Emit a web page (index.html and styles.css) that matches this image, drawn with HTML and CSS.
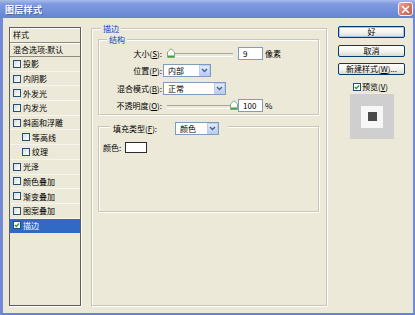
FILE: index.html
```html
<!DOCTYPE html>
<html lang="zh-CN">
<head>
<meta charset="utf-8">
<title>图层样式</title>
<link rel="stylesheet" href="styles.css">
</head>
<body>
<div class="win">
  <div class="title">
    <span class="ttext">图层样式</span>
    <span class="close"><svg width="9" height="9" viewBox="0 0 9 9"><path d="M1.5 1.5 L7.5 7.5 M7.5 1.5 L1.5 7.5" stroke="#fff" stroke-width="1.6" stroke-linecap="round"/></svg></span>
  </div>
  <div class="frame">
    <div class="list">
      <div class="lhead">样式</div>
      <div class="lblend">混合选项:默认</div>
      <div class="item"><span class="cb"></span>投影</div>
      <div class="item"><span class="cb"></span>内阴影</div>
      <div class="item"><span class="cb"></span>外发光</div>
      <div class="item"><span class="cb"></span>内发光</div>
      <div class="item"><span class="cb"></span>斜面和浮雕</div>
      <div class="item sub"><span class="cb"></span>等高线</div>
      <div class="item sub"><span class="cb"></span>纹理</div>
      <div class="item"><span class="cb"></span>光泽</div>
      <div class="item"><span class="cb"></span>颜色叠加</div>
      <div class="item"><span class="cb"></span>渐变叠加</div>
      <div class="item"><span class="cb"></span>图案叠加</div>
      <div class="item sel"><span class="cb"><svg width="6" height="6" viewBox="0 0 7 7"><path d="M1 3.5 L2.8 5.3 L6 1.6" stroke="#21a121" stroke-width="1.7" fill="none"/></svg></span>描边</div>
    </div>

    <div class="main grp">
      <span class="lg">描边</span>
      <div class="inner grp">
        <span class="lg">结构</span>
        <div class="row">
          <span class="lab">大小(<u>S</u>):</span>
          <span class="slider"><span class="thumb t-left"><svg width="8" height="10" viewBox="0 0 8 10"><path d="M0.5 9.5 V4 L4 0.7 L7.5 4 V9.5 Z" fill="#fdfdfb" stroke="#8aa58a"/><rect x="1" y="7.5" width="6" height="1.6" fill="#2fae2f"/></svg></span></span>
          <span class="inp">9</span>
          <span class="unit">像素</span>
        </div>
        <div class="row">
          <span class="lab">位置(<u>P</u>):</span>
          <span class="dd dd1">内部<span class="ddb"><svg width="7" height="5" viewBox="0 0 7 5"><path d="M1 1 L3.5 3.5 L6 1" stroke="#4d6185" stroke-width="1.4" fill="none"/></svg></span></span>
        </div>
        <div class="row">
          <span class="lab">混合模式(<u>B</u>):</span>
          <span class="dd dd2">正常<span class="ddb"><svg width="7" height="5" viewBox="0 0 7 5"><path d="M1 1 L3.5 3.5 L6 1" stroke="#4d6185" stroke-width="1.4" fill="none"/></svg></span></span>
        </div>
        <div class="row">
          <span class="lab">不透明度(<u>O</u>):</span>
          <span class="slider"><span class="thumb t-right"><svg width="8" height="10" viewBox="0 0 8 10"><path d="M0.5 9.5 V4 L4 0.7 L7.5 4 V9.5 Z" fill="#fdfdfb" stroke="#8aa58a"/><rect x="1" y="7.5" width="6" height="1.6" fill="#2fae2f"/></svg></span></span>
          <span class="inp">100</span>
          <span class="unit">%</span>
        </div>
      </div>

      <div class="fill grp">
        <div class="lg2">
          <span class="flab">填充类型(<u>F</u>):</span>
          <span class="dd dd3">颜色<span class="ddb"><svg width="7" height="5" viewBox="0 0 7 5"><path d="M1 1 L3.5 3.5 L6 1" stroke="#4d6185" stroke-width="1.4" fill="none"/></svg></span></span>
        </div>
        <div class="crow">
          <span class="clab">颜色:</span>
          <span class="swatch"></span>
        </div>
      </div>
    </div>

    <div class="side">
      <div class="btn def">好</div>
      <div class="btn">取消</div>
      <div class="btn">新建样式(<u>W</u>)...</div>
      <div class="pv"><span class="cb"><svg width="6" height="6" viewBox="0 0 7 7"><path d="M1 3.5 L2.8 5.3 L6 1.6" stroke="#21a121" stroke-width="1.7" fill="none"/></svg></span>预览(<u>V</u>)</div>
      <div class="pbox"><div class="pwhite"><div class="pdark"></div></div></div>
    </div>
  </div>
</div>
</body>
</html>
```
FILE: styles.css
```css
* { box-sizing: border-box; }
html, body { margin: 0; padding: 0; }
body {
  width: 415px; height: 315px; overflow: hidden;
  font-family: "Noto Sans CJK SC", "Noto Sans", sans-serif;
  font-size: 8px; color: #000; background: #ece9d8;
}
u { text-decoration: underline; }
.win { width: 415px; height: 315px; display: flex; flex-direction: column; background: #ece9d8; }

.title {
  height: 18px; flex: none; display: flex; align-items: center; justify-content: space-between;
  padding: 0 2px 0 5px;
  background: linear-gradient(#a7bcee, #7f9ade 22%, #7390da 60%, #6783d2);
  color: #fff; font-weight: bold; font-size: 9px; letter-spacing: 0.3px;
}
.ttext { text-shadow: 1px 1px 0 #4a64a8; }
.close {
  width: 15px; height: 14px; border: 1px solid #f4f4f4; border-radius: 3px;
  background: linear-gradient(135deg, #eca596, #d9735f 55%, #c9604d);
  display: flex; align-items: center; justify-content: center;
}

.frame {
  flex: 1; display: flex; align-items: flex-start;
  padding: 8px 0 0 6px;
  border-left: 3px solid #7189d6; border-right: 2px solid #7189d6; border-bottom: 2px solid #6a82cf;
}

/* left list */
.list {
  width: 72px; height: 279px; margin-top: 1px; flex: none;
  border: 1px solid #5d5d5a; box-shadow: 1px 1px 0 #fff;
  display: flex; flex-direction: column;
}
.lhead { height: 15px; line-height: 14px; padding-left: 3px; border-bottom: 1px solid #8e8b7e; box-shadow: inset 1px 1px 0 #fff; }
.lblend { height: 14px; line-height: 13px; padding-left: 3px; border-bottom: 1px solid #8e8b7e; box-shadow: inset 0 1px 0 #fff; }
.item { height: 14.7px; display: flex; align-items: center; padding-left: 3px; border-bottom: 1px solid #f5f4ed; }
.item.sub { padding-left: 12px; }
.item.sel { background: #316ac5; color: #fff; border-bottom-color: #316ac5; }
.cb {
  width: 8px; height: 8px; flex: none; margin-right: 2px;
  border: 1px solid #1c5180; background: linear-gradient(135deg, #dcdcd5, #fff);
  display: flex; align-items: center; justify-content: center;
}
.sel .cb { background: #fff; }

/* group boxes */
.grp { position: relative; border: 1px solid #c9c6b6; box-shadow: inset 1px 1px 0 #fff, 1px 1px 0 #fff; }
.lg { position: absolute; top: -6px; left: 10px; padding: 0 2px; line-height: 11px; background: #ece9d8; color: #0046d5; }
.main { width: 236px; height: 278px; margin: 2px 0 0 10px; padding: 10px 0 0 6px; flex: none; }
.main > .lg { left: 9px; }
.inner { width: 221px; height: 76px; padding-top: 7px; }
.inner > .lg { left: 8px; top: -6px; }

.row { display: flex; align-items: center; height: 13px; margin-bottom: 4.3px; }
.lab { width: 64px; text-align: right; padding-right: 1px; white-space: nowrap; }
.slider { position: relative; width: 72px; height: 13px; }
.slider::before {
  content: ""; position: absolute; left: 4px; right: 2px; top: 6px; height: 2px;
  border-top: 1px solid #a7a698; border-bottom: 1px solid #fff;
}
.thumb { position: absolute; top: 1px; width: 8px; height: 10px; line-height: 0; }
.t-left { left: 4px; }
.t-right { left: 67px; }
.inp {
  width: 25px; height: 13px; margin-left: 3px; padding-left: 4px;
  border: 1px solid #7f9db9; background: #fff; line-height: 11px;
}
.unit { margin-left: 2px; }

.dd {
  height: 13px; border: 1px solid #7f9db9; background: #fff;
  display: flex; align-items: center; padding-left: 4px; line-height: 11px;
}
.ddb {
  margin-left: auto; width: 11px; height: 11px; border: 1px solid #bccdf4;
  background: linear-gradient(#e2eafe, #b9cdf8);
  display: flex; align-items: center; justify-content: center;
}
.dd1 { width: 48px; }
.dd2 { width: 63px; }
.dd3 { width: 44px; }

.fill { width: 221px; height: 86px; margin-top: 11px; padding: 15px 0 0 4px; }
.lg2 { position: absolute; top: -5px; left: 11px; display: flex; align-items: center; padding: 0 9px 0 3px; background: #ece9d8; }
.flab { width: 62px; white-space: nowrap; }
.crow { display: flex; align-items: center; height: 11px; }
.clab { width: 22px; }
.swatch { width: 22px; height: 11px; border: 1px solid #2b2b2b; background: #fff; }

/* right side */
.side { width: 67px; margin-left: 11px; flex: none; display: flex; flex-direction: column; }
.btn {
  height: 12px; margin-bottom: 6.7px; white-space: nowrap;
  border: 1px solid #003c74; border-radius: 2px;
  background: linear-gradient(#ffffff, #f3f2ec 55%, #dcd8cc);
  display: flex; align-items: center; justify-content: center; line-height: 10px;
}
.btn.def { box-shadow: inset 0 0 0 1px #a9c1ef; }
.pv { height: 9px; display: flex; align-items: center; padding-left: 15px; margin-top: 0.3px; }
.pv .cb { margin-right: 1px; background: #fff; }
.pbox {
  width: 44px; height: 45px; margin: 3px 0 0 12px;
  background: #cfcfcf; display: flex; align-items: center; justify-content: center;
}
.pwhite { width: 22px; height: 22px; background: #f7f7f7; display: flex; align-items: center; justify-content: center; }
.pdark { width: 9px; height: 9px; background: #4a4a4a; }
```
